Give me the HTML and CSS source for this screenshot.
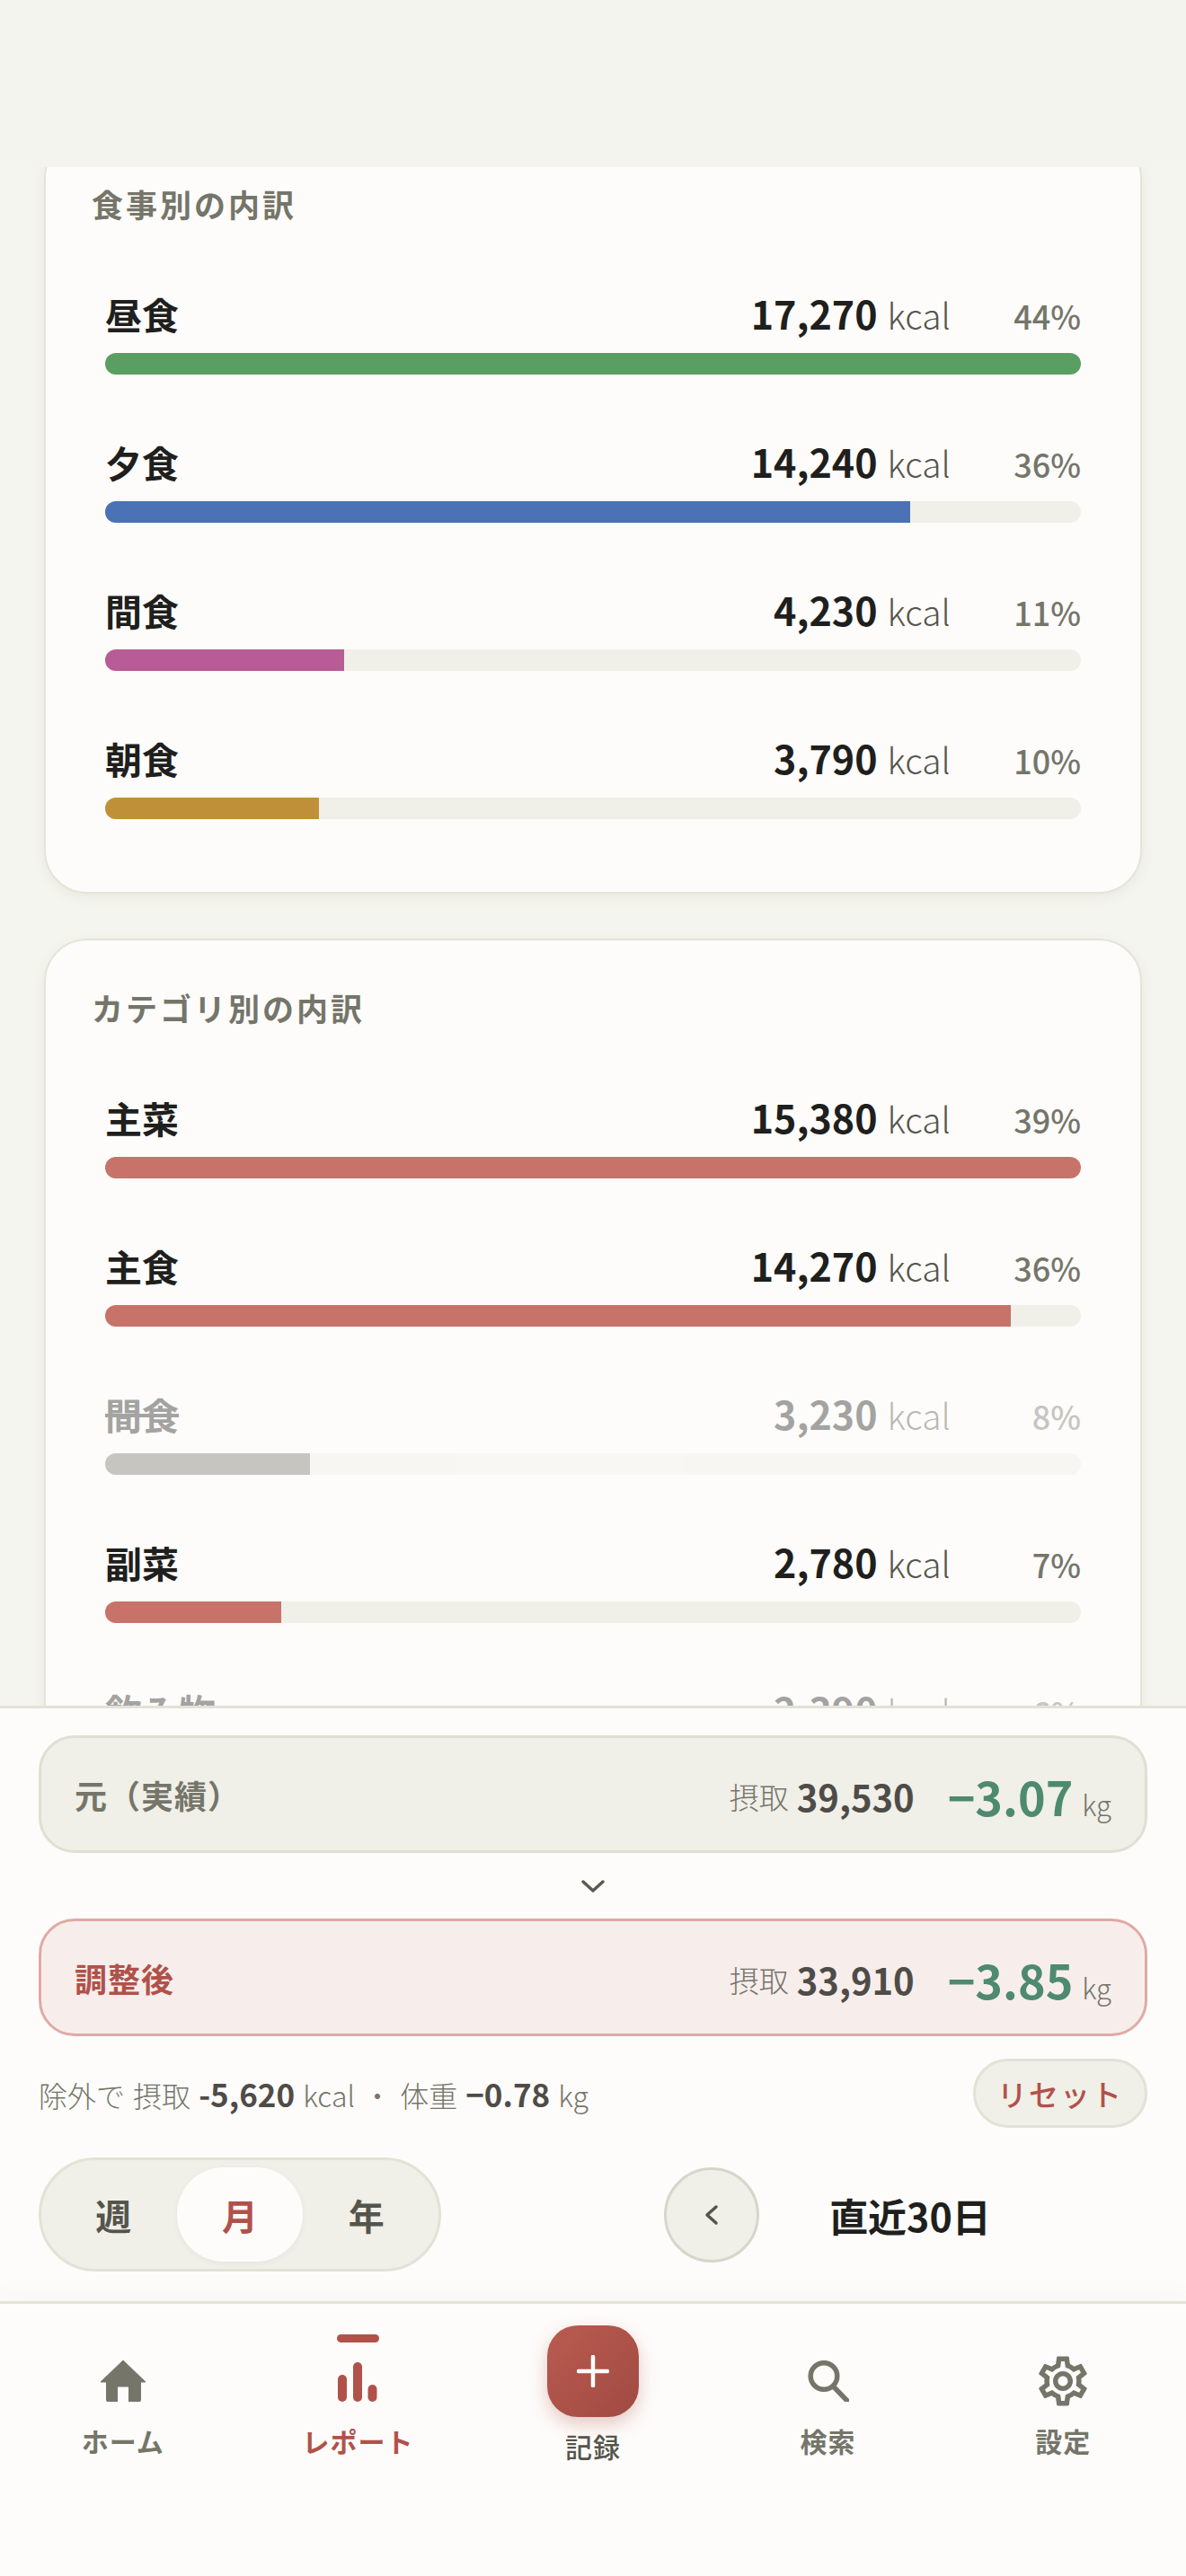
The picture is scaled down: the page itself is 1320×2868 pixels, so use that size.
FILE: index.html
```html
<!DOCTYPE html>
<html lang="ja">
<head>
<meta charset="utf-8">
<title>レポート</title>
<link rel="stylesheet" href="styles.css">
</head>
<body>
<div class="app">
  <header class="top"></header>
  <main class="scroll">
    <div class="scroll-inner">
      <section class="card">
        <h2 class="card-title">食事別の内訳</h2>
        <div class="rows">
          <div class="row">
            <div class="head"><span class="name">昼食</span><span class="num">17,270</span><span class="unit">kcal</span><span class="pct">44%</span></div>
            <div class="track"><div class="fill green" style="width:100%"></div></div>
          </div>
          <div class="row">
            <div class="head"><span class="name">夕食</span><span class="num">14,240</span><span class="unit">kcal</span><span class="pct">36%</span></div>
            <div class="track"><div class="fill blue" style="width:82.46%"></div></div>
          </div>
          <div class="row">
            <div class="head"><span class="name">間食</span><span class="num">4,230</span><span class="unit">kcal</span><span class="pct">11%</span></div>
            <div class="track"><div class="fill pink" style="width:24.5%"></div></div>
          </div>
          <div class="row">
            <div class="head"><span class="name">朝食</span><span class="num">3,790</span><span class="unit">kcal</span><span class="pct">10%</span></div>
            <div class="track"><div class="fill yellow" style="width:21.95%"></div></div>
          </div>
        </div>
      </section>
      <section class="card">
        <h2 class="card-title">カテゴリ別の内訳</h2>
        <div class="rows">
          <div class="row">
            <div class="head"><span class="name">主菜</span><span class="num">15,380</span><span class="unit">kcal</span><span class="pct">39%</span></div>
            <div class="track"><div class="fill coral" style="width:100%"></div></div>
          </div>
          <div class="row">
            <div class="head"><span class="name">主食</span><span class="num">14,270</span><span class="unit">kcal</span><span class="pct">36%</span></div>
            <div class="track"><div class="fill coral" style="width:92.78%"></div></div>
          </div>
          <div class="row off">
            <div class="head"><span class="name">間食</span><span class="num">3,230</span><span class="unit">kcal</span><span class="pct">8%</span></div>
            <div class="track"><div class="fill muted" style="width:21%"></div></div>
          </div>
          <div class="row">
            <div class="head"><span class="name">副菜</span><span class="num">2,780</span><span class="unit">kcal</span><span class="pct">7%</span></div>
            <div class="track"><div class="fill coral" style="width:18.08%"></div></div>
          </div>
          <div class="row off">
            <div class="head"><span class="name">飲み物</span><span class="num">2,390</span><span class="unit">kcal</span><span class="pct">6%</span></div>
            <div class="track"><div class="fill muted" style="width:15.5%"></div></div>
          </div>
        </div>
      </section>
    </div>
  </main>

  <section class="panel">
    <div class="compare">
      <span class="compare-label">元（実績）</span>
      <span class="intake-group"><span class="intake-label">摂取</span><span class="intake">39,530</span></span>
      <span class="delta-group"><span class="delta">−3.07</span><span class="delta-unit">kg</span></span>
    </div>
    <div class="arrow">
      <svg class="arrow-icon" viewBox="0 0 28 16"><path d="M3 3l11 10L25 3"/></svg>
    </div>
    <div class="compare adjusted">
      <span class="compare-label">調整後</span>
      <span class="intake-group"><span class="intake-label">摂取</span><span class="intake">33,910</span></span>
      <span class="delta-group"><span class="delta">−3.85</span><span class="delta-unit">kg</span></span>
    </div>
    <div class="note-row">
      <p class="note">除外で 摂取 <b>-5,620</b> kcal ・ 体重 <b>−0.78</b> kg</p>
      <button class="reset">リセット</button>
    </div>
    <div class="controls">
      <div class="seg">
        <button class="seg-btn">週</button>
        <button class="seg-btn active">月</button>
        <button class="seg-btn">年</button>
      </div>
      <div class="range">
        <button class="prev"><svg class="prev-icon" viewBox="0 0 16 24"><path d="M13 3L3 12l10 9"/></svg></button>
        <span class="range-title">直近30日</span>
        <span class="next-slot"></span>
      </div>
    </div>
  </section>

  <nav class="nav">
    <a class="nav-item">
      <span class="nav-icon">
        <svg class="i-home" viewBox="0 0 50 46"><path d="M25 0L50 24H44.5V44a2 2 0 0 1-2 2H31.5V29h-13V46H8.5a2 2 0 0 1-2-2V24H0z"/></svg>
      </span>
      <span class="nav-label">ホーム</span>
    </a>
    <a class="nav-item current">
      <span class="indicator"></span>
      <span class="nav-icon">
        <svg class="i-report" viewBox="0 0 44 44"><rect x="0" y="14" width="10" height="30" rx="5"/><rect x="17" y="0" width="10" height="44" rx="5"/><rect x="33.500" y="25" width="10" height="19" rx="5"/></svg>
      </span>
      <span class="nav-label">レポート</span>
    </a>
    <a class="nav-item add">
      <span class="add-btn"><svg class="i-plus" viewBox="0 0 36 36"><path d="M18 2v32M2 18h32"/></svg></span>
      <span class="nav-label">記録</span>
    </a>
    <a class="nav-item">
      <span class="nav-icon">
        <svg class="i-search" viewBox="0 0 46 46"><circle cx="18" cy="17.500" r="14.800"/><path d="M28.500 29L43.500 44.500"/></svg>
      </span>
      <span class="nav-label">検索</span>
    </a>
    <a class="nav-item">
      <span class="nav-icon">
        <svg class="i-gear" viewBox="0 0 24 24"><path d="M19.43 12.98c.04-.32.07-.64.07-.98 0-.34-.03-.66-.07-.98l2.11-1.65c.19-.15.24-.42.12-.64l-2-3.46c-.09-.16-.26-.25-.44-.25-.06 0-.12.01-.17.03l-2.49 1c-.52-.4-1.08-.73-1.69-.98l-.38-2.65C14.46 2.18 14.25 2 14 2h-4c-.25 0-.46.18-.49.42l-.38 2.65c-.61.25-1.17.59-1.69.98l-2.49-1c-.06-.02-.12-.03-.18-.03-.17 0-.34.09-.43.25l-2 3.46c-.13.22-.07.49.12.64l2.11 1.65c-.04.32-.07.65-.07.98 0 .33.03.66.07.98l-2.11 1.65c-.19.15-.24.42-.12.64l2 3.46c.09.16.26.25.44.25.06 0 .12-.01.17-.03l2.49-1c.52.4 1.08.73 1.69.98l.38 2.65c.03.24.24.42.49.42h4c.25 0 .46-.18.49-.42l.38-2.65c.61-.25 1.17-.59 1.69-.98l2.49 1c.06.02.12.03.18.03.17 0 .34-.09.43-.25l2-3.46c.12-.22.07-.49-.12-.64l-2.11-1.65zm-1.98-1.71c.04.31.05.52.05.73 0 .21-.02.43-.05.73l-.14 1.13.89.7 1.08.84-.7 1.21-1.27-.51-1.04-.42-.9.68c-.43.32-.84.56-1.25.73l-1.06.43-.16 1.13-.2 1.35h-1.4l-.19-1.35-.16-1.13-1.06-.43c-.43-.18-.83-.41-1.23-.71l-.91-.7-1.06.43-1.27.51-.7-1.21 1.08-.84.89-.7-.14-1.13c-.03-.31-.05-.54-.05-.74s.02-.43.05-.73l.14-1.13-.89-.7-1.08-.84.7-1.21 1.27.51 1.04.42.9-.68c.43-.32.84-.56 1.25-.73l1.06-.43.16-1.13.2-1.35h1.39l.19 1.35.16 1.13 1.06.43c.43.18.83.41 1.23.71l.91.7 1.06-.43 1.27-.51.7 1.21-1.07.85-.89.7.14 1.13zM12 8c-2.21 0-4 1.79-4 4s1.79 4 4 4 4-1.79 4-4-1.79-4-4-4zm0 6c-1.1 0-2-.9-2-2s.9-2 2-2 2 .9 2 2-.9 2-2 2z"/></svg>
      </span>
      <span class="nav-label">設定</span>
    </a>
  </nav>
</div>
</body>
</html>
```

FILE: styles.css
```css
* { box-sizing: border-box; }
html, body { margin: 0; padding: 0; }
body {
  background: #f5f5ef;
  color: #1f1f1d;
  font-family: "Noto Sans CJK JP", "Noto Sans", sans-serif;
}
button { font-family: inherit; padding: 0; cursor: pointer; }

.app { height: 2868px; display: flex; flex-direction: column; overflow: hidden; }
.top { height: 186px; flex: none; background: #f4f4ee; }

.scroll { flex: 1; min-height: 0; overflow: hidden; }
.scroll-inner {
  margin-top: -36px;
  padding: 0 49px;
  display: flex;
  flex-direction: column;
  gap: 50px;
}

.card {
  background: #fdfcfa;
  border: 2px solid #e4e4d8;
  border-radius: 48px;
  padding: 50px 51px 81px;
  box-shadow: 0 4px 14px rgba(90, 90, 70, 0.07);
}
.card-title {
  margin: 0 0 70px;
  font-size: 35px;
  line-height: 50px;
  font-weight: 700;
  letter-spacing: 3px;
  color: #75756a;
}
.rows { padding: 0 15px; display: flex; flex-direction: column; gap: 70px; }

.head { display: flex; align-items: baseline; height: 60px; line-height: 53px; margin-bottom: 11px; }
.name { flex: 1; font-size: 41px; font-weight: 700; }
.num { font-size: 43px; font-weight: 700; }
.unit { margin-left: 11px; font-size: 39px; font-weight: 300; color: #55554c; }
.pct { width: 145px; text-align: right; font-size: 36px; font-weight: 500; color: #75756a; }

.track { height: 24px; border-radius: 12px; background: #f0efe8; overflow: hidden; }
.fill { height: 100%; }
.green { background: #5a9e62; }
.blue { background: #4a72b4; }
.pink { background: #b85c95; }
.yellow { background: #c09038; }
.coral { background: #c8736a; }
.muted { background: #75756a; }

.off { opacity: 0.4; }
.off .name { text-decoration: line-through; }

.panel {
  flex: none;
  position: relative;
  background: #fdfcfa;
  border-top: 3px solid #e2e2d6;
  padding: 30px 43px 33px;
}
.compare {
  height: 131px;
  display: flex;
  align-items: center;
  padding: 0 37px;
  background: #f0efe8;
  border: 3px solid #dfdfd3;
  border-radius: 40px;
}
.compare.adjusted { background: #f7eeec; border-color: #e0aaa5; }
.compare-label { flex: 1; font-size: 36px; font-weight: 700; color: #75756a; letter-spacing: 1px; }
.adjusted .compare-label { color: #b0524a; }
.intake-group { display: flex; align-items: center; margin-top: 4px; }
.delta-group { display: flex; align-items: baseline; margin-top: 4px; margin-left: 37px; }
.intake-label { font-size: 33px; font-weight: 300; color: #75756a; }
.intake { margin-left: 9px; font-size: 40px; font-weight: 600; color: #4f4c48; }
.delta { font-size: 52px; font-weight: 700; color: #4e8a70; }
.delta-unit { margin-left: 10px; font-size: 31px; font-weight: 300; color: #75756a; }

.arrow { height: 73px; display: flex; align-items: center; justify-content: center; }
.arrow-icon { width: 28px; height: 16px; fill: none; stroke: #5a5a50; stroke-width: 3.500; stroke-linecap: round; stroke-linejoin: round; }

.note-row { margin-top: 25px; height: 77px; display: flex; align-items: center; justify-content: space-between; }
.note { margin: 0; font-size: 32px; font-weight: 300; word-spacing: 2px; color: #75756a; }
.note b { font-size: 35px; font-weight: 700; color: #4f4c48; }
.reset {
  width: 194px;
  height: 77px;
  border-radius: 39px;
  border: 3px solid #e2e2d6;
  background: #f0efe8;
  font-size: 33px;
  font-weight: 500;
  letter-spacing: 2px;
  color: #b0524a;
}

.controls { margin-top: 33px; display: flex; align-items: center; justify-content: space-between; }
.seg {
  display: flex;
  padding: 8px 10px;
  width: 448px;
  border: 3px solid #e2e2d6;
  border-radius: 64px;
  background: #f0efe8;
}
.seg-btn {
  width: 141px;
  height: 105px;
  border: 0;
  border-radius: 52px;
  background: transparent;
  font-size: 40px;
  font-weight: 700;
  color: #55554c;
}
.seg-btn.active { background: #fdfcfa; color: #b0524a; box-shadow: 0 2px 6px rgba(90, 90, 70, 0.06); }

.range { width: 538px; display: flex; align-items: center; }
.prev {
  width: 106px;
  height: 106px;
  flex: none;
  display: flex;
  align-items: center;
  justify-content: center;
  border-radius: 50%;
  border: 3px solid #d6d6ca;
  background: #f0efe8;
}
.prev-icon { width: 16px; height: 24px; fill: none; stroke: #55554c; stroke-width: 3.500; stroke-linecap: round; stroke-linejoin: round; }
.range-title { flex: 1; text-align: center; font-size: 43px; font-weight: 700; color: #1f1f1d; }
.next-slot { width: 96px; flex: none; }

.nav {
  flex: none;
  height: 306px;
  position: relative;
  display: flex;
  align-items: flex-start;
  padding: 53px 6px 0;
  background: #fdfcfa;
  border-top: 3px solid #e4e4da;
  box-shadow: 0 -8px 24px rgba(90, 90, 70, 0.04);
}
.nav-item {
  flex: 1;
  position: relative;
  display: flex;
  flex-direction: column;
  align-items: center;
  color: #75756a;
}
.nav-item.current { color: #b0524a; }
.nav-icon { height: 66px; display: flex; align-items: center; justify-content: center; }
.nav-label { margin-top: 13px; font-size: 30px; line-height: 40px; font-weight: 700; letter-spacing: 1px; }
.indicator {
  position: absolute;
  top: -19px;
  left: 50%;
  margin-left: -23px;
  width: 47px;
  height: 9px;
  border-radius: 5px;
  background: #b0524a;
}
.i-home { width: 50px; height: 46px; fill: #75756a; stroke: #75756a; stroke-width: 1; stroke-linejoin: round; }
.i-report { width: 44px; height: 44px; margin-top: 2px; fill: #b0524a; }
.i-search { width: 46px; height: 46px; fill: none; stroke: #75756a; stroke-width: 5.500; stroke-linecap: round; }
.i-gear { width: 66px; height: 66px; fill: #75756a; }

.add-btn {
  margin-top: -29px;
  width: 102px;
  height: 102px;
  display: flex;
  align-items: center;
  justify-content: center;
  border-radius: 34px;
  background: linear-gradient(135deg, #ba5b50, #a04a42);
  box-shadow: 0 8px 20px rgba(176, 82, 74, 0.3);
}
.add .nav-label { margin-top: 12px; font-weight: 500; color: #55554c; }
.i-plus { width: 36px; height: 36px; fill: none; stroke: #fdfcfa; stroke-width: 4.500; stroke-linecap: round; }
```
